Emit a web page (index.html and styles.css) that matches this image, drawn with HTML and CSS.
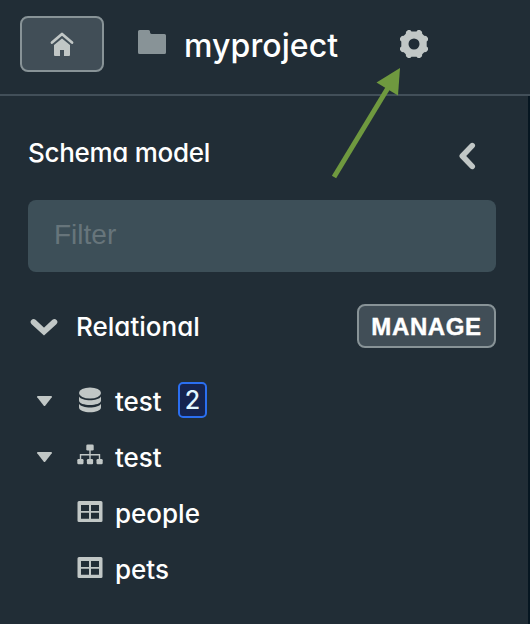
FILE: index.html
```html
<!DOCTYPE html>
<html lang="en">
<head>
<meta charset="utf-8">
<title>myproject</title>
<link rel="stylesheet" href="styles.css">
</head>
<body>
<header class="topbar">
  <button class="home" aria-label="Home">
    <svg width="24" height="24" viewBox="0 0 24 24"><path d="M2 10.500 12 2l10 8.500" fill="none" stroke="currentColor" stroke-width="2.800" stroke-linecap="round" stroke-linejoin="round"/><path d="M4 13 12 6.500l8 6.500v10q0 1-1 1h-5v-6h-4v6H5q-1 0-1-1z" fill="currentColor"/></svg>
  </button>
  <svg class="folder" width="28" height="24" viewBox="0 0 28 24"><path d="M0 1.500Q0 0 1.500 0h9Q12 0 12 1.500v.7Q12 4 13.700 4h12.800Q28 4 28 5.500v17q0 1.500-1.500 1.500h-25Q0 24 0 22.500z" fill="currentColor"/></svg>
  <h1 class="project">myproject</h1>
  <svg class="gear" width="28" height="28" viewBox="-14 -14 28 28"><path fill-rule="evenodd" fill="currentColor" d="M-6-14h2.200L-2.500-12.500h5L3.800-14H6L8-12.200 8.200-10.200 10.200-8.200 12.200-8 14-6v2.200L12.700-2.500v5L14 3.800V6l-1.800 2-2 .2-2 2-.2 2L6 14H3.800L2.500 12.700h-5L-3.800 14H-6l-2-1.800-.2-2-2-2-2-.2L-14 6V3.800l1.300-1.300v-5L-14-3.800V-6l1.800-2 2-.2 2-2 .2-2zM0-5.500A5.500 5.500 0 1 0 0 5.500 5.500 5.500 0 1 0 0-5.500z"/></svg>
</header>
<main class="panel">
  <div class="heading">
    <h2>Schema model</h2>
    <svg class="collapse" width="18" height="28" viewBox="0 0 18 28"><path d="M14.200 3.600 4.300 14l9.900 10.400" fill="none" stroke="currentColor" stroke-width="5.600" stroke-linecap="round" stroke-linejoin="round"/></svg>
  </div>
  <input class="filter" placeholder="Filter" aria-label="Filter">
  <div class="section">
    <svg width="28" height="18" viewBox="0 0 28 18"><path d="M3.600 4 14 13.600 24.400 4" fill="none" stroke="currentColor" stroke-width="5.800" stroke-linecap="round" stroke-linejoin="miter"/></svg>
    <span class="section-name">Relational</span>
    <button class="manage">MANAGE</button>
  </div>
  <ul class="tree">
    <li>
      <svg class="caret" width="15" height="11" viewBox="0 0 15 11"><path d="M1 0h13q1.400 0 .8 1.200L8.400 9.600q-.9 1-1.800 0L.2 1.200Q-.4 0 1 0z" fill="currentColor"/></svg>
      <svg class="icon" width="26" height="26" viewBox="0 0 26 26"><g fill="currentColor"><ellipse cx="13" cy="6" rx="11" ry="5.500"/><path d="M2 9.500c3 5 19 5 22 0v4c0 6-22 6-22 0z"/><path d="M2 16.800c3 5 19 5 22 0v3.500c0 6.700-22 6.700-22 0z"/></g></svg>
      <span class="name">test</span><span class="badge">2</span>
    </li>
    <li>
      <svg class="caret" width="15" height="11" viewBox="0 0 15 11"><path d="M1 0h13q1.400 0 .8 1.200L8.400 9.600q-.9 1-1.800 0L.2 1.200Q-.4 0 1 0z" fill="currentColor"/></svg>
      <svg class="icon" width="26" height="26" viewBox="0 0 26 26"><path d="M13 7v10M3.500 17v-5.300h19V17" fill="none" stroke="currentColor" stroke-width="1.400"/><g fill="currentColor"><rect x="9.300" y="1.500" width="7.400" height="6" rx="1.300"/><rect x=".3" y="16" width="6.200" height="5.200" rx="1.200"/><rect x="9.900" y="16" width="6.200" height="5.200" rx="1.200"/><rect x="19.500" y="16" width="6.200" height="5.200" rx="1.200"/></g></svg>
      <span class="name">test</span>
    </li>
    <li class="leaf">
      <svg class="icon" width="26" height="26" viewBox="0 0 26 26"><path fill-rule="evenodd" fill="currentColor" d="M2 2h22q1.500 0 1.500 1.500v18.300q0 1.200-1.500 1.200H2Q.5 23 .5 21.800V3.500Q.5 2 2 2zM4 6v6h8V6zm10 0v6h8V6zM4 13.700v6h8v-6zm10 0v6h8v-6z"/></svg>
      <span class="name">people</span>
    </li>
    <li class="leaf">
      <svg class="icon" width="26" height="26" viewBox="0 0 26 26"><path fill-rule="evenodd" fill="currentColor" d="M2 2h22q1.500 0 1.500 1.500v18.300q0 1.200-1.500 1.200H2Q.5 23 .5 21.800V3.500Q.5 2 2 2zM4 6v6h8V6zm10 0v6h8V6zM4 13.700v6h8v-6zm10 0v6h8v-6z"/></svg>
      <span class="name">pets</span>
    </li>
  </ul>
</main>
<svg class="pointer" width="72" height="114" viewBox="0 0 72 114"><path d="M4 110 58.500 20" fill="none" stroke="currentColor" stroke-width="5"/><path d="M70 1 46.500 15.500 68 28.500z" fill="currentColor"/></svg>
</body>
</html>
```
FILE: styles.css
```css
* { box-sizing: border-box; }
body {
  margin: 0;
  width: 530px;
  height: 624px;
  overflow: hidden;
  position: relative;
  background: #212d36;
  color: #fff;
  font-family: Inter, "Open Sans", sans-serif;
  font-size: 26px;
  font-weight: 500;
  font-feature-settings: "cv11";
}
svg { display: block; flex: none; color: #c1c7c6; }
h1, h2 { margin: 0; font-weight: 500; white-space: nowrap; }
.topbar {
  display: flex;
  align-items: flex-start;
  height: 96px;
  padding: 16px 0 0 20px;
  border-bottom: 2px solid #424f59;
}
.home {
  display: flex;
  align-items: center;
  justify-content: center;
  width: 84px;
  height: 56px;
  padding: 0;
  background: #414e57;
  border: 2px solid #889397;
  border-radius: 8px;
}
.folder { margin: 14px 0 0 34px; color: #889397; }
.project {
  width: 154px;
  margin: 10px 0 0 18px;
  font-size: 32px;
  line-height: 40px;
  letter-spacing: 0.1px;
}
.gear { margin: 14px 0 0 62px; }
.panel {
  height: 528px;
  padding: 36px 32px 0 28px;
  border-right: 2px solid #061621;
}
.heading { display: flex; justify-content: space-between; height: 68px; }
h2 { font-size: 26px; line-height: 42px; letter-spacing: -0.3px; }
.collapse { margin: 10px 20px 0 0; }
.filter {
  display: block;
  width: 468px;
  height: 72px;
  padding: 0 26px 2px;
  border: 0;
  border-radius: 8px;
  background: #3d4f58;
  font: 28px "Liberation Sans", sans-serif;
}
.filter::placeholder { color: #67757b; opacity: 1; }
.section { display: flex; align-items: center; height: 44px; margin-top: 32px; padding-left: 2px; }
.section > svg { margin-top: 2px; }
.section-name { margin-left: 18px; padding-top: 2px; line-height: 44px; }
.manage {
  width: 139px;
  height: 44px;
  margin-left: auto;
  padding: 1px 0 0;
  flex: none;
  color: #fff;
  background: #414e57;
  border: 2px solid #889397;
  border-radius: 8px;
  font: bold 24px/39px "Liberation Sans", sans-serif;
  letter-spacing: 0.6px;
  -webkit-text-stroke: 0.4px #fff;
}
.tree { list-style: none; margin: 24px 0 0; padding: 0; }
.tree li { display: flex; align-items: center; height: 56px; padding-left: 9px; }
.tree li.leaf { padding-left: 49px; }
.caret { margin-top: 2px; }
.icon { margin-left: 25px; }
.leaf .icon { margin-left: 0; }
.name { margin-left: 12px; padding-top: 2px; }
.badge {
  width: 29px;
  height: 36px;
  margin-left: auto;
  margin-right: 289px;
  border: 2px solid #2b6ff0;
  border-radius: 5px;
  background: #15244f;
  color: #e1f7ff;
  font-size: 25px;
  line-height: 33px;
  text-align: center;
}
.pointer { position: absolute; left: 330px; top: 67px; color: #6f993f; }
```
